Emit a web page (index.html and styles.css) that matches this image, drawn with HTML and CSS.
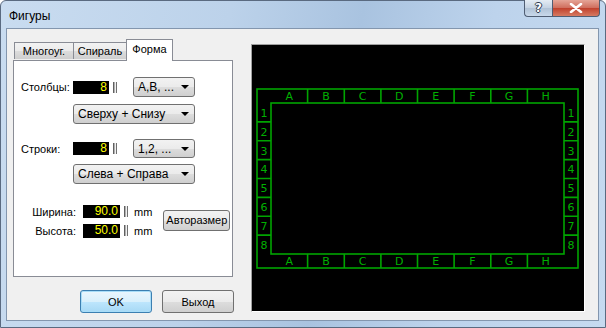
FILE: index.html
```html
<!DOCTYPE html>
<html lang="ru">
<head>
    <meta charset="UTF-8">
    <meta name="viewport" content="width=device-width, initial-scale=1.0">
    <title>Фигуры</title>
    <link rel="stylesheet" href="styles.css">
</head>
<body>
    <div class="window">
        <div class="titlebar">
            <span class="title">Фигуры</span>
            <div class="caption-buttons">
                <span class="cap-btn help"><span class="help-mark">?</span></span>
                <span class="cap-btn close">
                    <svg width="14" height="10" viewBox="0 0 14 10">
                        <path d="M2 1 L12 9 M12 1 L2 9" stroke="#fff" stroke-width="2.6" stroke-linecap="round"/>
                    </svg>
                </span>
            </div>
        </div>

        <div class="client">
            <div class="left-col">
                <div class="tabs">
                    <span class="tab">Многоуг.</span>
                    <span class="tab">Спираль</span>
                    <span class="tab active">Форма</span>
                </div>
                <div class="pane">
                    <div class="row row-cols">
                        <span class="label">Столбцы:</span>
                        <span class="num">8</span>
                        <span class="spin"></span>
                        <div class="combo short"><span>A,B, ...</span><i class="arrow"></i></div>
                    </div>
                    <div class="row row-sub">
                        <div class="combo long"><span>Сверху + Снизу</span><i class="arrow"></i></div>
                    </div>
                    <div class="row row-rows">
                        <span class="label">Строки:</span>
                        <span class="num">8</span>
                        <span class="spin"></span>
                        <div class="combo short"><span>1,2, ...</span><i class="arrow"></i></div>
                    </div>
                    <div class="row row-sub2">
                        <div class="combo long"><span>Слева + Справа</span><i class="arrow"></i></div>
                    </div>
                    <div class="size-block">
                        <div class="size-fields">
                            <div class="size-row">
                                <span class="size-label">Ширина:</span>
                                <span class="num wide">90.0</span>
                                <span class="spin"></span>
                                <span class="unit">mm</span>
                            </div>
                            <div class="size-row">
                                <span class="size-label">Высота:</span>
                                <span class="num wide">50.0</span>
                                <span class="spin"></span>
                                <span class="unit">mm</span>
                            </div>
                        </div>
                        <button class="btn auto">Авторазмер</button>
                    </div>
                </div>
                <div class="dialog-buttons">
                    <button class="btn default">OK</button>
                    <button class="btn">Выход</button>
                </div>
            </div>

            <div class="preview">
                <svg width="332" height="266" viewBox="0 0 332 266" class="grid">
                    <g stroke="#00a400" stroke-width="1.6" fill="none">
                        <rect x="5" y="44" width="321" height="179"/>
                        <rect x="19" y="58" width="293" height="151"/>
                        <!-- column dividers, top and bottom -->
                        <path d="M55.6 44V58 M92.3 44V58 M128.9 44V58 M165.5 44V58 M202.1 44V58 M238.8 44V58 M275.4 44V58"/>
                        <path d="M55.6 209V223 M92.3 209V223 M128.9 209V223 M165.5 209V223 M202.1 209V223 M238.8 209V223 M275.4 209V223"/>
                        <!-- row dividers, left and right -->
                        <path d="M5 76.9H19 M5 95.8H19 M5 114.6H19 M5 133.5H19 M5 152.4H19 M5 171.3H19 M5 190.1H19"/>
                        <path d="M312 76.9H326 M312 95.8H326 M312 114.6H326 M312 133.5H326 M312 152.4H326 M312 171.3H326 M312 190.1H326"/>
                    </g>
                    <g class="marks" text-anchor="middle">
                        <text x="37.3" y="55">A</text>
                        <text x="73.9" y="55">B</text>
                        <text x="110.6" y="55">C</text>
                        <text x="147.2" y="55">D</text>
                        <text x="183.8" y="55">E</text>
                        <text x="220.4" y="55">F</text>
                        <text x="257.1" y="55">G</text>
                        <text x="293.7" y="55">H</text>

                        <text x="37.3" y="220">A</text>
                        <text x="73.9" y="220">B</text>
                        <text x="110.6" y="220">C</text>
                        <text x="147.2" y="220">D</text>
                        <text x="183.8" y="220">E</text>
                        <text x="220.4" y="220">F</text>
                        <text x="257.1" y="220">G</text>
                        <text x="293.7" y="220">H</text>

                        <text x="12" y="72">1</text>
                        <text x="12" y="91">2</text>
                        <text x="12" y="110">3</text>
                        <text x="12" y="128">4</text>
                        <text x="12" y="147">5</text>
                        <text x="12" y="166">6</text>
                        <text x="12" y="185">7</text>
                        <text x="12" y="204">8</text>

                        <text x="319" y="72">1</text>
                        <text x="319" y="91">2</text>
                        <text x="319" y="110">3</text>
                        <text x="319" y="128">4</text>
                        <text x="319" y="147">5</text>
                        <text x="319" y="166">6</text>
                        <text x="319" y="185">7</text>
                        <text x="319" y="204">8</text>
                    </g>
                </svg>
            </div>
        </div>
    </div>
</body>
</html>
```

FILE: styles.css
```css
body {
    margin: 0;
    width: 606px;
    height: 328px;
    overflow: hidden;
    font-family: "Liberation Sans", Arial, sans-serif;
    font-size: 11px;
    color: #000;
}

.window {
    width: 606px;
    height: 328px;
    box-sizing: border-box;
    border: 1px solid #5a6a80;
    border-radius: 6px 6px 0 0;
    background: linear-gradient(100deg, #c9dcf0 0%, #bcd2ea 35%, #a9c3e0 55%, #bdd3ec 75%, #c6daf0 100%);
}

.titlebar {
    height: 27px;
    display: flex;
    justify-content: space-between;
    align-items: flex-start;
}

.title {
    margin: 8px 0 0 8px;
    font-size: 12px;
}

.caption-buttons {
    display: flex;
    margin-right: 5px;
    margin-top: -1px;
}

.cap-btn {
    height: 17px;
    box-sizing: border-box;
    border: 1px solid #4f5d73;
    border-top: none;
    display: flex;
    align-items: center;
    justify-content: center;
}

.help {
    width: 28px;
    border-right: none;
    border-radius: 0 0 0 4px;
    background: linear-gradient(#e4ecf4, #c4d2e2 50%, #b0c2d6 51%, #c8d8ea);
}

.help-mark {
    font-family: "DejaVu Sans", sans-serif;
    font-weight: bold;
    font-size: 12px;
    line-height: 14px;
    color: #ffffff;
    text-shadow: 1px 0 0 #2c3a4e, -1px 0 0 #2c3a4e, 0 1px 0 #2c3a4e, 0 -1px 0 #2c3a4e;
}

.close {
    width: 48px;
    border-radius: 0 0 4px 0;
    background: linear-gradient(#e5a597, #cf6d5c 50%, #c0402c 51%, #d67a62);
}

.client {
    margin: 0 0 0 5px;
    width: 593px;
    height: 293px;
    box-sizing: border-box;
    border: 1px solid #8396ae;
    background: #f0f0f0;
    display: flex;
    padding: 10px 0 0 6px;
}

.left-col {
    width: 220px;
    display: flex;
    flex-direction: column;
}

.tabs {
    height: 21px;
    display: flex;
    align-items: flex-end;
    padding-left: 1px;
}

.tab {
    height: 17px;
    box-sizing: border-box;
    margin-bottom: 1px;
    padding-top: 2px;
    text-align: center;
    border: 1px solid #898c95;
    border-bottom: none;
    background: linear-gradient(#f2f2f2, #ebebeb 50%, #dddddd 51%, #cfcfcf);
}

.tab + .tab {
    margin-left: -1px;
}

.tab:nth-child(1) { width: 60px; }
.tab:nth-child(2) { width: 54px; }

.tab.active {
    position: relative;
    z-index: 1;
    width: 47px;
    height: 22px;
    margin-bottom: -1px;
    margin-left: -1px;
    padding-top: 3px;
    background: #fff;
}

.pane {
    height: 217px;
    box-sizing: border-box;
    border: 1px solid #898c95;
    background: #fff;
    padding: 16px 0 0 7px;
}

.row {
    display: flex;
    align-items: center;
    height: 20px;
}

.row-sub {
    margin-top: 7px;
    padding-left: 52px;
}

.row-rows {
    margin-top: 15px;
    height: 19px;
}

.row-sub2 {
    margin-top: 6px;
    padding-left: 52px;
}

.label {
    width: 52px;
}

.num {
    width: 36px;
    height: 13px;
    box-sizing: border-box;
    background: #000;
    color: #ffff00;
    text-align: right;
    padding-right: 2px;
    font-size: 12px;
    line-height: 13px;
}

.num.wide {
    width: 37px;
}

.spin {
    width: 4px;
    height: 11px;
    margin-left: 4px;
    background: linear-gradient(to right, #606060 0 1px, #b0b0b0 1px 2px, #f0f0f0 2px 3px, #707070 3px 4px);
}

.combo {
    height: 20px;
    box-sizing: border-box;
    border: 1px solid #707070;
    border-radius: 3px;
    background: linear-gradient(#f2f2f2, #ebebeb 50%, #dddddd 51%, #cfcfcf);
    display: flex;
    justify-content: space-between;
    align-items: center;
    padding: 0 5px 0 4px;
    font-size: 12px;
}

.row-rows .combo {
    height: 19px;
}

.combo.short {
    width: 62px;
    margin-left: 16px;
}

.combo.long {
    width: 122px;
}

.arrow {
    width: 0;
    height: 0;
    border-style: solid;
    border-width: 4px 4px 0 4px;
    border-color: #000 transparent transparent transparent;
}

.size-block {
    margin-top: 21px;
    display: flex;
    align-items: center;
}

.size-fields {
    display: flex;
    flex-direction: column;
    gap: 6px;
}

.size-row {
    display: flex;
    align-items: center;
    height: 13px;
}

.size-row + .size-row .num {
    height: 14px;
}

.size-label {
    width: 55px;
    text-align: right;
    margin-right: 7px;
}

.unit {
    margin-left: 6px;
}

.btn {
    font-family: "Liberation Sans", Arial, sans-serif;
    font-size: 11px;
    color: #000;
    box-sizing: border-box;
    border: 1px solid #707070;
    border-radius: 3px;
    background: linear-gradient(#f2f2f2, #ebebeb 50%, #dddddd 51%, #cfcfcf);
    padding: 0;
}

.auto {
    width: 67px;
    height: 21px;
    margin-left: 11px;
    margin-top: -2px;
}

.dialog-buttons {
    display: flex;
    justify-content: flex-end;
    gap: 10px;
    margin-top: 13px;
    margin-right: -1px;
}

.dialog-buttons .btn {
    width: 72px;
    height: 23px;
}

.btn.default {
    border-color: #3c7fb1;
    background: linear-gradient(#eaf6fd, #d9f0fc 50%, #bee6fd 51%, #a7d9f5);
    box-shadow: inset 0 0 0 1px #a8ddf8;
}

.preview {
    margin: 5px 0 0 18px;
    width: 334px;
    height: 268px;
    box-sizing: border-box;
    border: 1px solid #fff;
    border-top-color: #a0a0a0;
    border-left-color: #a0a0a0;
    background: #000;
}

.grid {
    display: block;
}

.marks {
    font-family: "DejaVu Sans", sans-serif;
    font-size: 11px;
    fill: #00b000;
}
```
